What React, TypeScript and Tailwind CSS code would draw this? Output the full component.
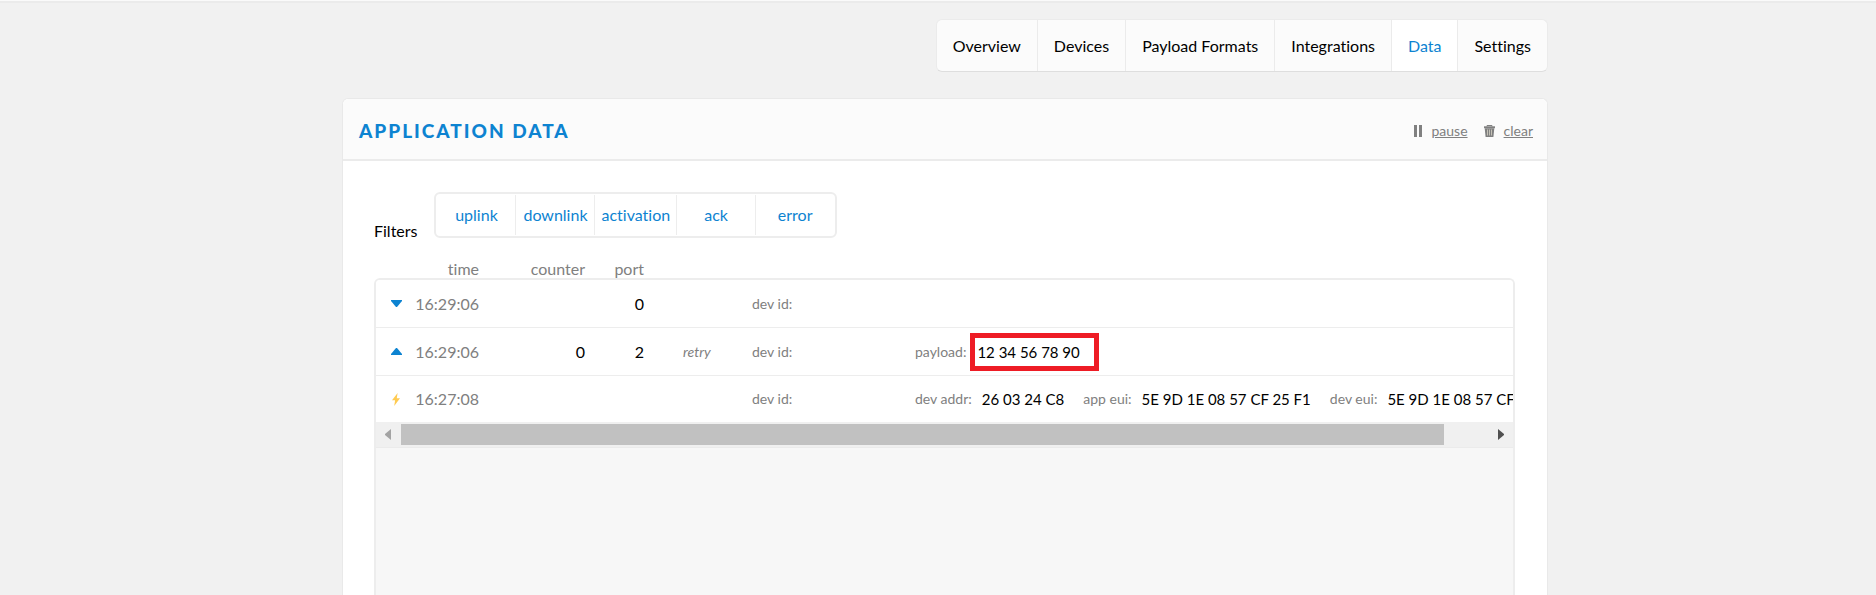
import React from "react";

const tabs = ["Overview", "Devices", "Payload Formats", "Integrations", "Data", "Settings"];
const filters = ["uplink", "downlink", "activation", "ack", "error"];

type Kind = "down" | "up" | "activation";
type Field = { label: string; value: string; marked?: boolean };
type Entry = { kind: Kind; time: string; counter?: string; port?: string; note?: string; fields: Field[] };

const entries: Entry[] = [
  { kind: "down", time: "16:29:06", port: "0", fields: [] },
  {
    kind: "up",
    time: "16:29:06",
    counter: "0",
    port: "2",
    note: "retry",
    fields: [{ label: "payload:", value: "12 34 56 78 90", marked: true }],
  },
  {
    kind: "activation",
    time: "16:27:08",
    fields: [
      { label: "dev addr:", value: "26 03 24 C8" },
      { label: "app eui:", value: "5E 9D 1E 08 57 CF 25 F1" },
      { label: "dev eui:", value: "5E 9D 1E 08 57 CF" },
    ],
  },
];

function KindIcon({ kind }: { kind: Kind }) {
  if (kind === "activation") {
    return (
      <svg width="11" height="13" viewBox="-1 0 11 13" aria-label="activation">
        <path d="M5.6 0 0 7.2h3.1L2.2 13 8 5.2H4.8z" fill="#ffcb52" />
      </svg>
    );
  }
  return (
    <svg width="11" height="7" viewBox="0 0 11 7" aria-label={kind}>
      <path d={kind === "down" ? "M0 0h11v1L6 7H5L0 1z" : "M0 7h11V6L6 0H5L0 6z"} fill="#0d83d1" />
    </svg>
  );
}

function PauseIcon() {
  return (
    <svg width="8" height="12" viewBox="0 0 8 12" fill="#808080" aria-hidden="true">
      <path d="M0 0h3v12H0zM5 0h3v12H5z" />
    </svg>
  );
}

function TrashIcon() {
  return (
    <svg width="11" height="12" viewBox="0 0 11 12" aria-hidden="true">
      <path d="M3 1.5V.5h5v1" fill="none" stroke="#808080" />
      <path d="M0 1.3h11V3.2H0z" fill="#808080" />
      <path d="M.7 3.2h9.6L9.4 12H1.6z" fill="#808080" />
      <path d="M3.5 4.5v6M5.5 4.5v6M7.5 4.5v6" stroke="#d6d2c4" strokeWidth=".8" />
    </svg>
  );
}

function Row({ entry, last }: { entry: Entry; last: boolean }) {
  return (
    <tr className={`flex items-center bg-white ${last ? "h-[46px]" : "h-12 border-b border-[#ededed]"}`}>
      <td className="w-[37px] shrink-0 pl-[15px]">
        <KindIcon kind={entry.kind} />
      </td>
      <td className="w-[66px] shrink-0 text-right text-[#808080]">{entry.time}</td>
      <td className="w-[106px] shrink-0 text-right">{entry.counter}</td>
      <td className="w-[59px] shrink-0 text-right">{entry.port}</td>
      <td className="w-[108px] shrink-0 pl-[39px] text-sm text-[#808080] italic">{entry.note}</td>
      <td className="w-[163px] shrink-0 text-sm text-[#808080]">dev id:</td>
      <td className="flex shrink-0 items-center gap-[19px] whitespace-nowrap">
        {entry.fields.map((f) => (
          <span key={f.label} className="flex items-center">
            <span className="text-sm text-[#808080]">{f.label}</span>
            {f.marked ? (
              <span className="ml-1 border-[5px] border-[#ee1c25] py-0.5 pr-3.5 pl-0.5 text-[15px] leading-6">
                {f.value}
              </span>
            ) : (
              <span className="ml-2.5 text-[15px] leading-6">{f.value}</span>
            )}
          </span>
        ))}
      </td>
    </tr>
  );
}

export default function App() {
  return (
    <div className="flex min-h-screen flex-col border-t border-[#fafafa] bg-[#f1f1f1] font-['Lato',sans-serif] text-base text-black [font-variant-ligatures:none]">
      <div className="h-[2px] bg-[#ebebeb]" />
      <div className="flex flex-1 flex-col pl-3.5">
        <div className="mx-auto flex w-full max-w-[1206px] flex-1 flex-col">
          <nav className="mt-4 flex self-end rounded-md border border-[#ebebeb] border-b-[#dedede] bg-[#fbfbfb]">
            {tabs.map((t, i) => (
              <a
                key={t}
                href={`#${t}`}
                className={`px-4 pt-3.5 pb-[13px] ${i > 0 ? "border-l border-[#ebebeb]" : ""} ${
                  t === "Data" ? "bg-white text-[#0d83d1]" : ""
                }`}
              >
                {t}
              </a>
            ))}
          </nav>

          <section className="mt-[26px] flex flex-1 flex-col rounded-t-md border border-b-0 border-[#e9e9e9] bg-white">
            <header className="flex items-center justify-between rounded-t-md border-b-2 border-[#ebebeb] bg-[#fbfbfb] pr-3.5 pl-4">
              <h1 className="pt-[18px] pb-3.5 text-[19px] leading-7 font-black tracking-[2px] text-[#0d83d1] uppercase">
                Application Data
              </h1>
              <div className="flex items-center gap-4 pt-1 text-sm text-[#808080]">
                <button type="button" className="flex items-center gap-[9px]">
                  <PauseIcon />
                  <span className="underline">pause</span>
                </button>
                <button type="button" className="flex items-center gap-[9px]">
                  <TrashIcon />
                  <span className="underline">clear</span>
                </button>
              </div>
            </header>

            <div className="flex flex-1 flex-col pt-[31px] pr-8 pl-[31px]">
              <div className="flex items-end gap-[17px]">
                <span id="filters" className="leading-3.5">
                  Filters
                </span>
                <div
                  role="group"
                  aria-labelledby="filters"
                  className="flex rounded-md border-2 border-[#ededed] p-px"
                >
                  {filters.map((f, i) => (
                    <button
                      key={f}
                      type="button"
                      className={`h-10 px-1.5 text-[#0d83d1] ${
                        i > 0 ? "min-w-[79px] border-l border-[#ededed]" : "min-w-[78px]"
                      }`}
                    >
                      {f}
                    </button>
                  ))}
                </div>
              </div>

              <table className="mt-[23px] block">
                <thead className="block">
                  <tr className="flex pb-px pl-[43px] leading-none text-[#808080]">
                    <th className="w-[62px] text-right font-normal">time</th>
                    <th className="w-[106px] text-right font-normal">counter</th>
                    <th className="w-[59px] text-right font-normal">port</th>
                  </tr>
                </thead>
                <tbody className="block overflow-hidden rounded-t-md border-2 border-b-0 border-[#ededed]">
                  {entries.map((e, i) => (
                    <Row key={i} entry={e} last={i === entries.length - 1} />
                  ))}
                </tbody>
              </table>

              <div className="flex flex-1 flex-col border-x-2 border-[#ededed] bg-[#f7f7f7]">
                <div className="flex h-[26px] items-center justify-between border-b border-[#ebebeb] bg-[#f0f0f0] px-[9px]">
                  <svg width="6" height="11" viewBox="0 0 6 11" aria-hidden="true">
                    <path d="M6 0v11L0 6V5z" fill="#a3a3a3" />
                  </svg>
                  <div className="mr-[54px] ml-[10px] h-[21px] flex-1 bg-[#c1c1c1]" />
                  <svg width="6" height="11" viewBox="0 0 6 11" aria-hidden="true">
                    <path d="M0 0v11l6-5V5z" fill="#505050" />
                  </svg>
                </div>
              </div>
            </div>
          </section>
        </div>
      </div>
    </div>
  );
}
